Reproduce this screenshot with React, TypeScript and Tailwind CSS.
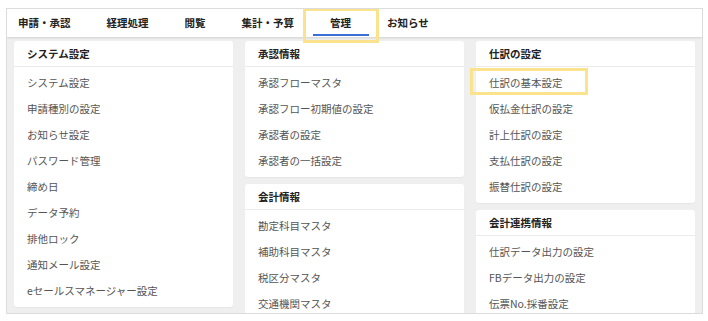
const TABS = ["申請・承認", "経理処理", "閲覧", "集計・予算", "管理", "お知らせ"];

type Group = { title: string; items: string[] };

const COLUMNS: Group[][] = [
  [
    {
      title: "システム設定",
      items: [
        "システム設定",
        "申請種別の設定",
        "お知らせ設定",
        "パスワード管理",
        "締め日",
        "データ予約",
        "排他ロック",
        "通知メール設定",
        "eセールスマネージャー設定",
      ],
    },
  ],
  [
    {
      title: "承認情報",
      items: ["承認フローマスタ", "承認フロー初期値の設定", "承認者の設定", "承認者の一括設定"],
    },
    {
      title: "会計情報",
      items: ["勘定科目マスタ", "補助科目マスタ", "税区分マスタ", "交通機関マスタ"],
    },
  ],
  [
    {
      title: "仕訳の設定",
      items: ["仕訳の基本設定", "仮払金仕訳の設定", "計上仕訳の設定", "支払仕訳の設定", "振替仕訳の設定"],
    },
    {
      title: "会計連携情報",
      items: ["仕訳データ出力の設定", "FBデータ出力の設定", "伝票No.採番設定"],
    },
  ],
];

function Card({ group }: { group: Group }) {
  return (
    <div className="rounded-[3px] bg-white shadow-[0_1px_1px_rgba(0,0,0,0.04)]">
      <div className="flex h-[26px] items-center border-b border-[#ebebeb] px-[13px] text-[10.5px] font-bold text-[#222]">
        {group.title}
      </div>
      <ul className="py-[3px]">
        {group.items.map((item) => (
          <li key={item} className="relative flex h-[26px] items-center px-[13px] text-[10.5px] text-[#555]">
            {item}
            {item === "仕訳の基本設定" && (
              <span className="pointer-events-none absolute left-[-6px] top-[-2px] h-[27px] w-[118px] border-[3px] border-[#fbe28c]" />
            )}
          </li>
        ))}
      </ul>
    </div>
  );
}

export default function App() {
  return (
    <div
      className="h-[321px] w-[708px] bg-white pl-[6px] pt-[8px]"
      style={{ fontFamily: '"Noto Sans CJK JP", "Noto Sans", sans-serif' }}
    >
      <div className="flex h-[306px] w-[697px] flex-col overflow-hidden border border-[#dcdcdc]">
        {/* Top tab bar */}
        <div className="relative z-10 flex h-[28px] shrink-0 items-center gap-[36px] bg-white pl-[11px] shadow-[0_1px_2px_rgba(0,0,0,0.12)]">
          {TABS.map((tab) => (
            <span key={tab} className="relative flex h-full items-center text-[10.5px] font-bold text-[#222]">
              {tab}
              {tab === "管理" && (
                <>
                  <span className="absolute bottom-[1px] left-[-17px] right-[-18px] h-[2px] bg-[#3a6fd8]" />
                  <span className="pointer-events-none absolute left-[-27px] right-[-28px] top-[-1px] h-[35px] border-[3px] border-[#fbe28c]" />
                </>
              )}
            </span>
          ))}
        </div>

        {/* Menu panel */}
        <div className="grid flex-1 grid-cols-3 items-start gap-[12px] bg-[#efefef] px-[7px] pt-[4px]">
          {COLUMNS.map((col, i) => (
            <div key={i} className="flex flex-col gap-[7px]">
              {col.map((g) => (
                <Card key={g.title} group={g} />
              ))}
            </div>
          ))}
        </div>
      </div>
    </div>
  );
}
